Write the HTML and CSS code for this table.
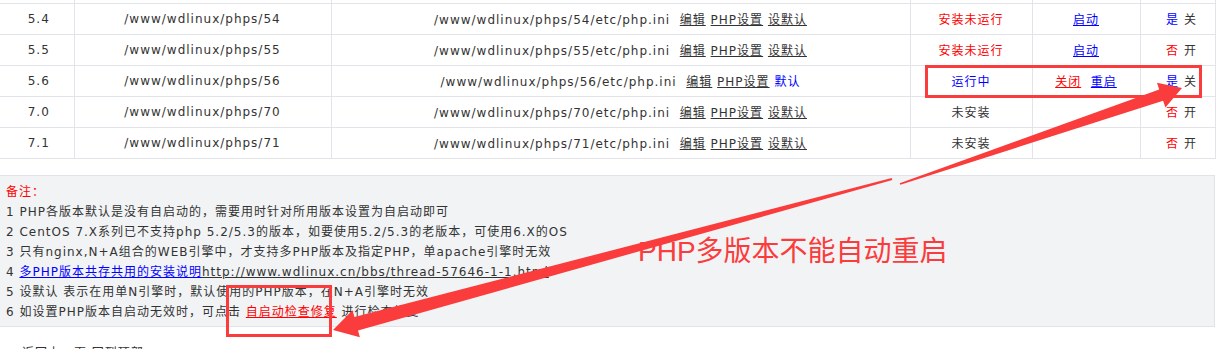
FILE: index.html
```html
<!DOCTYPE html>
<html lang="zh-CN">
<head>
<meta charset="utf-8">
<title>PHP多版本管理</title>
<link rel="stylesheet" href="styles.css">
</head>
<body>
<div class="page">
  <table class="php-table">
    <colgroup>
      <col class="c-ver"><col class="c-dir"><col class="c-ini"><col class="c-state"><col class="c-op"><col class="c-auto">
    </colgroup>
    <tbody>
      <tr class="cut"><td></td><td></td><td></td><td></td><td></td><td></td></tr>
      <tr>
        <td class="ver">5.4</td>
        <td>/www/wdlinux/phps/54</td>
        <td>/www/wdlinux/phps/54/etc/php.ini&nbsp; <a class="lk">编辑</a> <a class="lk">PHP设置</a> <a class="lk">设默认</a></td>
        <td class="red">安装未运行</td>
        <td><a class="lk blue">启动</a></td>
        <td class="auto"><span class="blue">是</span> <a class="sw">关</a></td>
      </tr>
      <tr>
        <td class="ver">5.5</td>
        <td>/www/wdlinux/phps/55</td>
        <td>/www/wdlinux/phps/55/etc/php.ini&nbsp; <a class="lk">编辑</a> <a class="lk">PHP设置</a> <a class="lk">设默认</a></td>
        <td class="red">安装未运行</td>
        <td><a class="lk blue">启动</a></td>
        <td class="auto"><span class="red">否</span> <a class="sw">开</a></td>
      </tr>
      <tr>
        <td class="ver">5.6</td>
        <td>/www/wdlinux/phps/56</td>
        <td>/www/wdlinux/phps/56/etc/php.ini&nbsp; <a class="lk">编辑</a> <a class="lk">PHP设置</a> <span class="blue">默认</span></td>
        <td class="blue">运行中</td>
        <td><a class="lk red">关闭</a>&nbsp; <a class="lk blue">重启</a></td>
        <td class="auto"><span class="blue">是</span> <a class="sw">关</a></td>
      </tr>
      <tr>
        <td class="ver">7.0</td>
        <td>/www/wdlinux/phps/70</td>
        <td>/www/wdlinux/phps/70/etc/php.ini&nbsp; <a class="lk">编辑</a> <a class="lk">PHP设置</a> <a class="lk">设默认</a></td>
        <td>未安装</td>
        <td></td>
        <td class="auto"><span class="red">否</span> <a class="sw">开</a></td>
      </tr>
      <tr>
        <td class="ver">7.1</td>
        <td>/www/wdlinux/phps/71</td>
        <td>/www/wdlinux/phps/71/etc/php.ini&nbsp; <a class="lk">编辑</a> <a class="lk">PHP设置</a> <a class="lk">设默认</a></td>
        <td>未安装</td>
        <td></td>
        <td class="auto"><span class="red">否</span> <a class="sw">开</a></td>
      </tr>
    </tbody>
  </table>

  <div class="notes">
    <div class="red">备注：</div>
    <div>1 PHP各版本默认是没有自启动的，需要用时针对所用版本设置为自启动即可</div>
    <div>2 CentOS 7.X系列已不支持php 5.2/5.3的版本，如要使用5.2/5.3的老版本，可使用6.X的OS</div>
    <div>3 只有nginx,N+A组合的WEB引擎中，才支持多PHP版本及指定PHP，单apache引擎时无效</div>
    <div>4 <a class="lk blue">多PHP版本共存共用的安装说明</a><a class="lk">http://www.wdlinux.cn/bbs/thread-57646-1-1.html</a></div>
    <div>5 设默认 表示在用单N引擎时，默认使用的PHP版本，在N+A引擎时无效</div>
    <div>6 如设置PHP版本自启动无效时，可点击 <a class="lk red">自启动检查修复</a> 进行检查修复</div>
  </div>

  <div class="footer"><a class="plain">返回上一页</a> <a class="plain">回到顶部</a></div>

  <svg class="marks" width="1221" height="349" viewBox="0 0 1221 349">
    <rect x="926.5" y="66.5" width="274" height="30" fill="none" stroke="#fa3c3c" stroke-width="3"/>
    <rect x="227.5" y="286.5" width="103" height="49" fill="none" stroke="#fa3c3c" stroke-width="3"/>
    <polygon fill="#fa3c3c" points="899.7,183.2 1159.2,89.4 1157,82.8 1182,88 1165.4,107.4 1163.1,100.8 900.3,184.8"/>
    <polygon fill="#fa3c3c" points="891.7,178 354.4,317 352.5,310.2 333,330 359.9,337.2 358,330.5 892.3,180"/>
  </svg>
  <div class="callout">PHP多版本不能自动重启</div>
</div>
</body>
</html>
```

FILE: styles.css
```css
* {
  box-sizing: border-box;
}

html,
body {
  margin: 0;
  padding: 0;
  background: #ffffff;
}

body {
  font-family: "DejaVu Sans", "Noto Sans CJK SC", sans-serif;
  font-size: 12px;
  letter-spacing: 1px;
  color: #333333;
}

.page {
  position: relative;
  width: 1221px;
  height: 349px;
  overflow: hidden;
}

.php-table {
  border-collapse: collapse;
  table-layout: fixed;
  width: 1215px;
}

.c-ver { width: 74px; }
.c-dir { width: 257px; }
.c-ini { width: 579px; }
.c-state { width: 122px; }
.c-op { width: 108px; }
.c-auto { width: 75px; }

.php-table td {
  border: 1px solid #e3e4e9;
  height: 31px;
  padding: 0 2px;
  text-align: center;
  white-space: nowrap;
  vertical-align: middle;
}

.php-table td:first-child {
  border-left: none;
}

.php-table .cut td {
  height: 3px;
  padding: 0;
  border-top: none;
  font-size: 0;
  line-height: 0;
}

.php-table td.ver {
  padding-left: 6px;
}

.php-table td.auto {
  padding-left: 10px;
}

.lk {
  color: #333333;
  text-decoration: underline;
  cursor: pointer;
}

.sw {
  color: #333333;
  text-decoration: none;
  cursor: pointer;
}

.red,
.lk.red {
  color: #ff0000;
}

.blue,
.lk.blue {
  color: #0000ff;
}

.notes {
  margin-top: 16px;
  width: 1215px;
  background: #f2f3f5;
  border: 1px solid #e1e3e8;
  border-left: none;
  padding: 6px 6px 4px;
  line-height: 20px;
}

.footer {
  padding: 16px 0 0 22px;
  line-height: 20px;
}

.plain {
  color: #333333;
  text-decoration: none;
}

.marks {
  position: absolute;
  left: 0;
  top: 0;
}

.callout {
  position: absolute;
  left: 638px;
  top: 238px;
  font-family: "Liberation Sans", "Noto Sans CJK SC", sans-serif;
  font-size: 28px;
  line-height: 28px;
  letter-spacing: 0;
  color: #fa3c3c;
  white-space: nowrap;
}
```
